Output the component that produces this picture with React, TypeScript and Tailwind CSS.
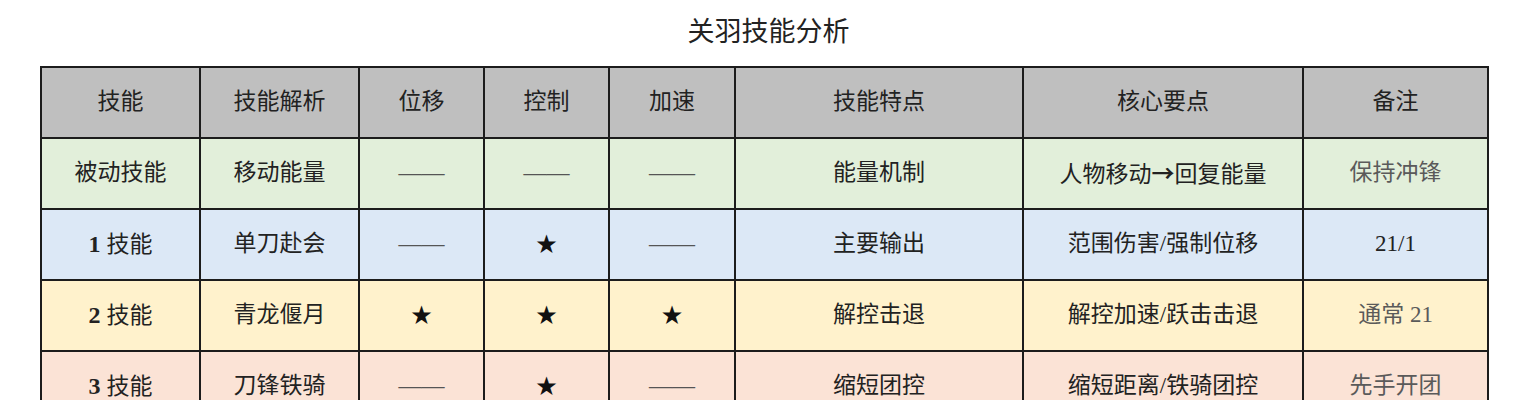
const rows = [
  {
    bg: "bg-[#e2efda]",
    skill: "被动技能",
    num: "",
    name: "移动能量",
    move: "dash",
    ctrl: "dash",
    speed: "dash",
    feature: "能量机制",
    core: ["人物移动", "回复能量"],
    note: "保持冲锋",
    noteDark: false,
  },
  {
    bg: "bg-[#dce8f6]",
    skill: "技能",
    num: "1",
    name: "单刀赴会",
    move: "dash",
    ctrl: "star",
    speed: "dash",
    feature: "主要输出",
    core: ["范围伤害/强制位移"],
    note: "21/1",
    noteDark: true,
  },
  {
    bg: "bg-[#fff2cc]",
    skill: "技能",
    num: "2",
    name: "青龙偃月",
    move: "star",
    ctrl: "star",
    speed: "star",
    feature: "解控击退",
    core: ["解控加速/跃击击退"],
    note: "通常 21",
    noteDark: false,
  },
  {
    bg: "bg-[#fbe3d6]",
    skill: "技能",
    num: "3",
    name: "刀锋铁骑",
    move: "dash",
    ctrl: "star",
    speed: "dash",
    feature: "缩短团控",
    core: ["缩短距离/铁骑团控"],
    note: "先手开团",
    noteDark: false,
  },
];

const headers = ["技能", "技能解析", "位移", "控制", "加速", "技能特点", "核心要点", "备注"];
const widths = ["w-[159px]", "w-[159px]", "w-[125px]", "w-[125px]", "w-[126px]", "w-[288px]", "w-[280px]", "w-[185px]"];

function Mark({ kind }: { kind: string }) {
  if (kind === "star") return <span className="text-[21px] text-[#111]">★</span>;
  return <span className="text-[#555]">——</span>;
}

export default function App() {
  const cell = "border-2 border-[#1c1c1c] text-center align-middle";
  return (
    <div
      className="h-[400px] w-[1537px] overflow-hidden bg-white text-[#222]"
      style={{ fontFamily: '"Liberation Serif", "Noto Sans CJK SC", serif' }}
    >
      <h1 className="flex h-[66px] items-center justify-center pb-[1px] text-[27px] font-normal">关羽技能分析</h1>
      <table className="ml-[40px] w-[1448px] table-fixed border-collapse text-[23px]">
        <colgroup>
          {widths.map((w, i) => (
            <col key={i} className={w} />
          ))}
        </colgroup>
        <thead>
          <tr className="h-[71px] bg-[#bfbfbf]">
            {headers.map((h) => (
              <th key={h} className={`${cell} font-normal`}>
                {h}
              </th>
            ))}
          </tr>
        </thead>
        <tbody>
          {rows.map((r) => (
            <tr key={r.name} className={`h-[71px] ${r.bg}`}>
              <td className={cell}>
                {r.num && <span className="text-[24px] font-bold">{r.num} </span>}
                {r.skill}
              </td>
              <td className={cell}>{r.name}</td>
              <td className={cell}>
                <Mark kind={r.move} />
              </td>
              <td className={cell}>
                <Mark kind={r.ctrl} />
              </td>
              <td className={cell}>
                <Mark kind={r.speed} />
              </td>
              <td className={cell}>{r.feature}</td>
              <td className={cell}>
                {r.core.length > 1 ? (
                  <>
                    {r.core[0]}
                    <span className="font-bold" style={{ fontFamily: '"Noto Sans CJK SC", sans-serif' }}>
                      →
                    </span>
                    {r.core[1]}
                  </>
                ) : (
                  r.core[0]
                )}
              </td>
              <td className={`${cell} ${r.noteDark ? "text-[#222]" : "text-[#5a5a5a]"}`}>{r.note}</td>
            </tr>
          ))}
        </tbody>
      </table>
    </div>
  );
}
